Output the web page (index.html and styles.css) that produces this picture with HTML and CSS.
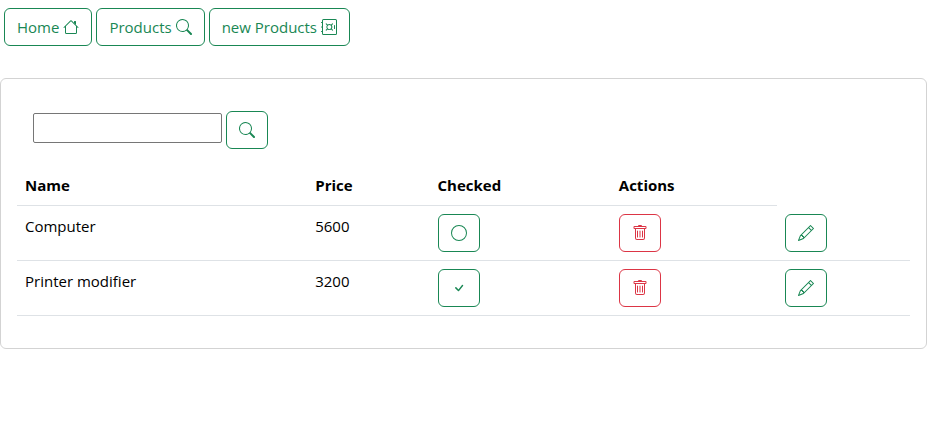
FILE: index.html
```html
<!DOCTYPE html>
<html lang="en">
<head>
<meta charset="utf-8">
<title>Products</title>
<link rel="stylesheet" href="styles.css">
</head>
<body>
<svg class="sprite" aria-hidden="true">
  <symbol id="house" viewBox="0 0 16 16"><path d="M2 13.5V7h1v6.5a.5.5 0 0 0 .5.5h9a.5.5 0 0 0 .5-.5V7h1v6.5a1.5 1.5 0 0 1-1.5 1.5h-9A1.5 1.5 0 0 1 2 13.5zm11-11V6l-2-2V2.5a.5.5 0 0 1 .5-.5h1a.5.5 0 0 1 .5.5z"/><path d="M7.293 1.5a1 1 0 0 1 1.414 0l6.647 6.646a.5.5 0 0 1-.708.708L8 2.207 1.354 8.854a.5.5 0 1 1-.708-.708L7.293 1.5z"/></symbol>
  <symbol id="search" viewBox="0 0 16 16"><path d="M11.742 10.344a6.5 6.5 0 1 0-1.397 1.398h-.001c.03.04.062.078.098.115l3.85 3.85a1 1 0 0 0 1.415-1.414l-3.85-3.85a1.007 1.007 0 0 0-.115-.1zM12 6.5a5.5 5.5 0 1 1-11 0 5.5 5.5 0 0 1 11 0z"/></symbol>
  <symbol id="safe" viewBox="0 0 16 16"><path d="M1 1.5A1.5 1.5 0 0 1 2.500 0h12A1.500 1.500 0 0 1 16 1.500v13a1.500 1.500 0 0 1-1.500 1.500h-12A1.500 1.500 0 0 1 1 14.500V13H.5a.5.5 0 0 1 0-1H1V8.500H.5a.5.5 0 0 1 0-1H1V4H.5a.5.5 0 0 1 0-1H1V1.500zM2.500 1a.5.5 0 0 0-.5.5v13a.5.5 0 0 0 .5.5h12a.5.5 0 0 0 .5-.5v-13a.5.5 0 0 0-.5-.5h-12z"/><path d="M13.500 6a.5.5 0 0 1 .5.5v3a.5.5 0 0 1-1 0v-3a.5.5 0 0 1 .5-.5zM4.828 4.464a.5.5 0 0 1 .708 0l1.090 1.090a3.003 3.003 0 0 1 3.476 0l1.090-1.090a.5.5 0 1 1 .707.708l-1.090 1.090c.74 1.037.74 2.440 0 3.476l1.090 1.090a.5.5 0 1 1-.707.708l-1.090-1.090a3.002 3.002 0 0 1-3.476 0l-1.090 1.090a.5.5 0 1 1-.708-.708l1.090-1.090a3.003 3.003 0 0 1 0-3.476l-1.090-1.090a.5.5 0 0 1 0-.708zM6.950 6.586a2 2 0 1 0 2.828 2.828A2 2 0 0 0 6.950 6.586z"/></symbol>
  <symbol id="circle" viewBox="0 0 16 16"><path d="M8 15A7 7 0 1 1 8 1a7 7 0 0 1 0 14zm0 1A8 8 0 1 0 8 0a8 8 0 0 0 0 16z"/></symbol>
  <symbol id="check" viewBox="0 0 16 16"><path d="M10.970 4.970a.75.75 0 0 1 1.070 1.050l-3.990 4.990a.75.75 0 0 1-1.080.02L4.324 8.384a.75.75 0 1 1 1.060-1.060l2.094 2.093 3.473-4.425a.267.267 0 0 1 .02-.022z"/></symbol>
  <symbol id="trash" viewBox="0 0 16 16"><path d="M5.500 5.500A.5.5 0 0 1 6 6v6a.5.5 0 0 1-1 0V6a.5.5 0 0 1 .5-.5zm2.500 0a.5.5 0 0 1 .5.5v6a.5.5 0 0 1-1 0V6a.5.5 0 0 1 .5-.5zm3 .5a.5.5 0 0 0-1 0v6a.5.5 0 0 0 1 0V6z"/><path fill-rule="evenodd" d="M14.500 3a1 1 0 0 1-1 1H13v9a2 2 0 0 1-2 2H5a2 2 0 0 1-2-2V4h-.5a1 1 0 0 1-1-1V2a1 1 0 0 1 1-1H6a1 1 0 0 1 1-1h2a1 1 0 0 1 1 1h3.500a1 1 0 0 1 1 1v1zM4.118 4 4 4.059V13a1 1 0 0 0 1 1h6a1 1 0 0 0 1-1V4.059L11.882 4H4.118zM2.500 3V2h11v1h-11z"/></symbol>
  <symbol id="pencil" viewBox="0 0 16 16"><path d="M12.146.146a.5.5 0 0 1 .708 0l3 3a.5.5 0 0 1 0 .708l-10 10a.5.5 0 0 1-.168.110l-5 2a.5.5 0 0 1-.650-.650l2-5a.5.5 0 0 1 .110-.168l10-10zM11.207 2.500 13.500 4.793 14.793 3.500 12.500 1.207 11.207 2.500zm1.586 3L10.500 3.207 4 9.707V10h.5a.5.5 0 0 1 .5.5v.5h.5a.5.5 0 0 1 .5.5v.5h.293l6.500-6.500zm-9.761 5.175-.106.106-1.528 3.821 3.821-1.528.106-.106A.5.5 0 0 1 5 12.500V12h-.5a.5.5 0 0 1-.5-.5V11h-.5a.5.5 0 0 1-.468-.325z"/></symbol>
</svg>

<nav class="nav">
  <a class="btn" href="#home">Home <svg class="icon"><use href="#house"/></svg></a>
  <a class="btn" href="#products">Products <svg class="icon"><use href="#search"/></svg></a>
  <a class="btn" href="#new">new Products <svg class="icon"><use href="#safe"/></svg></a>
</nav>

<main class="card">
  <form class="search">
    <input class="search-input" type="text" aria-label="Search products">
    <button class="btn" type="button" aria-label="Search"><svg class="icon"><use href="#search"/></svg></button>
  </form>
  <table class="table">
    <colgroup><col class="c-name"><col class="c-price"><col class="c-checked"><col class="c-actions"><col></colgroup>
    <thead>
      <tr><th scope="col">Name</th><th scope="col">Price</th><th scope="col">Checked</th><th scope="col">Actions</th></tr>
    </thead>
    <tbody>
      <tr>
        <td>Computer</td>
        <td>5600</td>
        <td><button class="btn" type="button" aria-label="Check"><svg class="icon"><use href="#circle"/></svg></button></td>
        <td><button class="btn danger" type="button" aria-label="Delete"><svg class="icon"><use href="#trash"/></svg></button></td>
        <td><button class="btn" type="button" aria-label="Edit"><svg class="icon"><use href="#pencil"/></svg></button></td>
      </tr>
      <tr>
        <td>Printer modifier</td>
        <td>3200</td>
        <td><button class="btn" type="button" aria-label="Uncheck"><svg class="icon"><use href="#check"/></svg></button></td>
        <td><button class="btn danger" type="button" aria-label="Delete"><svg class="icon"><use href="#trash"/></svg></button></td>
        <td><button class="btn" type="button" aria-label="Edit"><svg class="icon"><use href="#pencil"/></svg></button></td>
      </tr>
    </tbody>
  </table>
</main>
</body>
</html>
```
FILE: styles.css
```css
* { box-sizing: border-box; }

body {
  margin: 0 15px 0 0;
  font: 15px/24px "Open Sans", "Noto Sans", sans-serif;
  color: #000;
  background: #fff;
}

.sprite { display: none; }

.nav {
  display: flex;
  gap: 4px;
  padding: 8px 4px;
}

.btn {
  display: inline-flex;
  align-items: center;
  gap: 4px;
  height: 38px;
  padding: 6px 12px;
  border: 1px solid #198754;
  border-radius: 6px;
  background: transparent;
  color: #198754;
  font: inherit;
  text-decoration: none;
  white-space: nowrap;
  cursor: pointer;
}

.danger {
  border-color: #dc3545;
  color: #dc3545;
}

.icon {
  flex: none;
  width: 16px;
  height: 16px;
  fill: currentColor;
}

.card {
  margin-top: 24px;
  padding: 16px;
  border: 1px solid #d3d3d3;
  border-radius: 6px;
}

.search {
  display: flex;
  align-items: center;
  gap: 4px;
  padding: 16px;
}

.search-input {
  width: 189px;
  height: 30px;
  margin: 0 0 4px;
  padding: 1px 2px;
  border: 1px solid #767676;
  border-radius: 2px;
  font: inherit;
}

.table {
  width: 100%;
  margin-bottom: 16px;
  border-collapse: separate;
  border-spacing: 0;
  table-layout: fixed;
}

.c-name { width: 32.5%; }
.c-price { width: 13.7%; }
.c-checked { width: 20.3%; }
.c-actions { width: 18.6%; }

th,
td {
  padding: 8px;
  border-bottom: 1px solid #dee2e6;
  text-align: left;
  vertical-align: top;
}

td .btn { vertical-align: top; }
```
